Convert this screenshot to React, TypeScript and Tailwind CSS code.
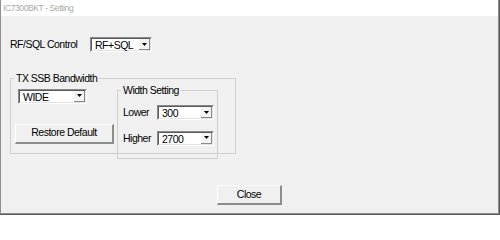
import React from "react";

const FONT = { fontFamily: '"Liberation Sans", Arial, sans-serif' };
const TXT = "text-[10.5px] tracking-[-0.5px] text-black";

function Combo({ value, width }: { value: string; width: string }) {
  return (
    <div className={`${width} h-[15px] flex border-t border-l border-t-[#8a8a8a] border-l-[#8a8a8a] border-b border-r border-b-white border-r-white`}>
      <div className="flex-1 flex bg-white border-t border-l border-t-[#5a5a5a] border-l-[#5a5a5a] border-b border-r border-b-[#e3e3e3] border-r-[#e3e3e3]">
        <span className={`flex-1 pl-[3px] leading-[12px] ${TXT}`}>{value}</span>
        <div className="w-[11px] flex items-center justify-center bg-[#f4f4f4] border-b border-r border-b-[#8a8a8a] border-r-[#8a8a8a]">
          <svg width="5" height="3" viewBox="0 0 5 3"><path d="M0 0h5L2.5 3z" fill="#000" /></svg>
        </div>
      </div>
    </div>
  );
}

function Btn({ label, className }: { label: string; className: string }) {
  return (
    <div className={`${className} flex items-center justify-center bg-[#f0f0f0] border-t border-l border-t-white border-l-white border-b-2 border-r-2 border-b-[#8c8c8c] border-r-[#8c8c8c] ${TXT}`}>
      {label}
    </div>
  );
}

export default function App() {
  return (
    <div className="w-[500px] h-[215px] overflow-hidden bg-[#5c5c5c]" style={FONT}>
      <div className="w-[499px] h-[214px] flex flex-col bg-[#f0f0f0] border-l border-r border-b border-[#8e8e8e]">
        <div className="h-[16px] bg-white flex items-center pl-[2px] text-[8.5px] text-[#a8a8a8] tracking-[-0.4px]">IC7300BKT - Setting</div>

        <div className="flex items-center mt-[21px] ml-[9px]">
          <span className={`w-[80px] ${TXT}`}>RF/SQL Control</span>
          <Combo value="RF+SQL" width="w-[62px]" />
        </div>

        <fieldset className="ml-[9px] mt-[19px] w-[226px] border border-[#cfcfcf] p-0 m-0 min-w-0">
          <legend className={`ml-[3px] px-[2px] leading-[13px] ${TXT}`}>TX SSB Bandwidth</legend>
          <div className="flex items-start">
            <div className="ml-[4px] w-[98px] flex flex-col mt-[4px] mb-[9px]">
              <div className="ml-[3px]">
                <Combo value="WIDE" width="w-[69px]" />
              </div>
              <Btn label="Restore Default" className="mt-[20px] w-[99px] h-[20px]" />
            </div>
            <fieldset className="ml-[4px] -mt-[1px] -mb-[6px] w-[101px] border border-[#cfcfcf] p-0 m-0 min-w-0">
              <legend className={`ml-[3px] px-[2px] leading-[13px] ${TXT}`}>Width Setting</legend>
              <div className="flex flex-col pl-[5px] pt-[8px] pb-[12px]">
                <div className="flex items-center">
                  <span className={`w-[34px] ${TXT}`}>Lower</span>
                  <Combo value="300" width="w-[57px]" />
                </div>
                <div className="flex items-center mt-[10px]">
                  <span className={`w-[34px] ${TXT}`}>Higher</span>
                  <Combo value="2700" width="w-[57px]" />
                </div>
              </div>
            </fieldset>
          </div>
        </fieldset>

        <Btn label="Close" className="mt-[31px] ml-[216px] w-[65px] h-[20px]" />
      </div>
    </div>
  );
}
